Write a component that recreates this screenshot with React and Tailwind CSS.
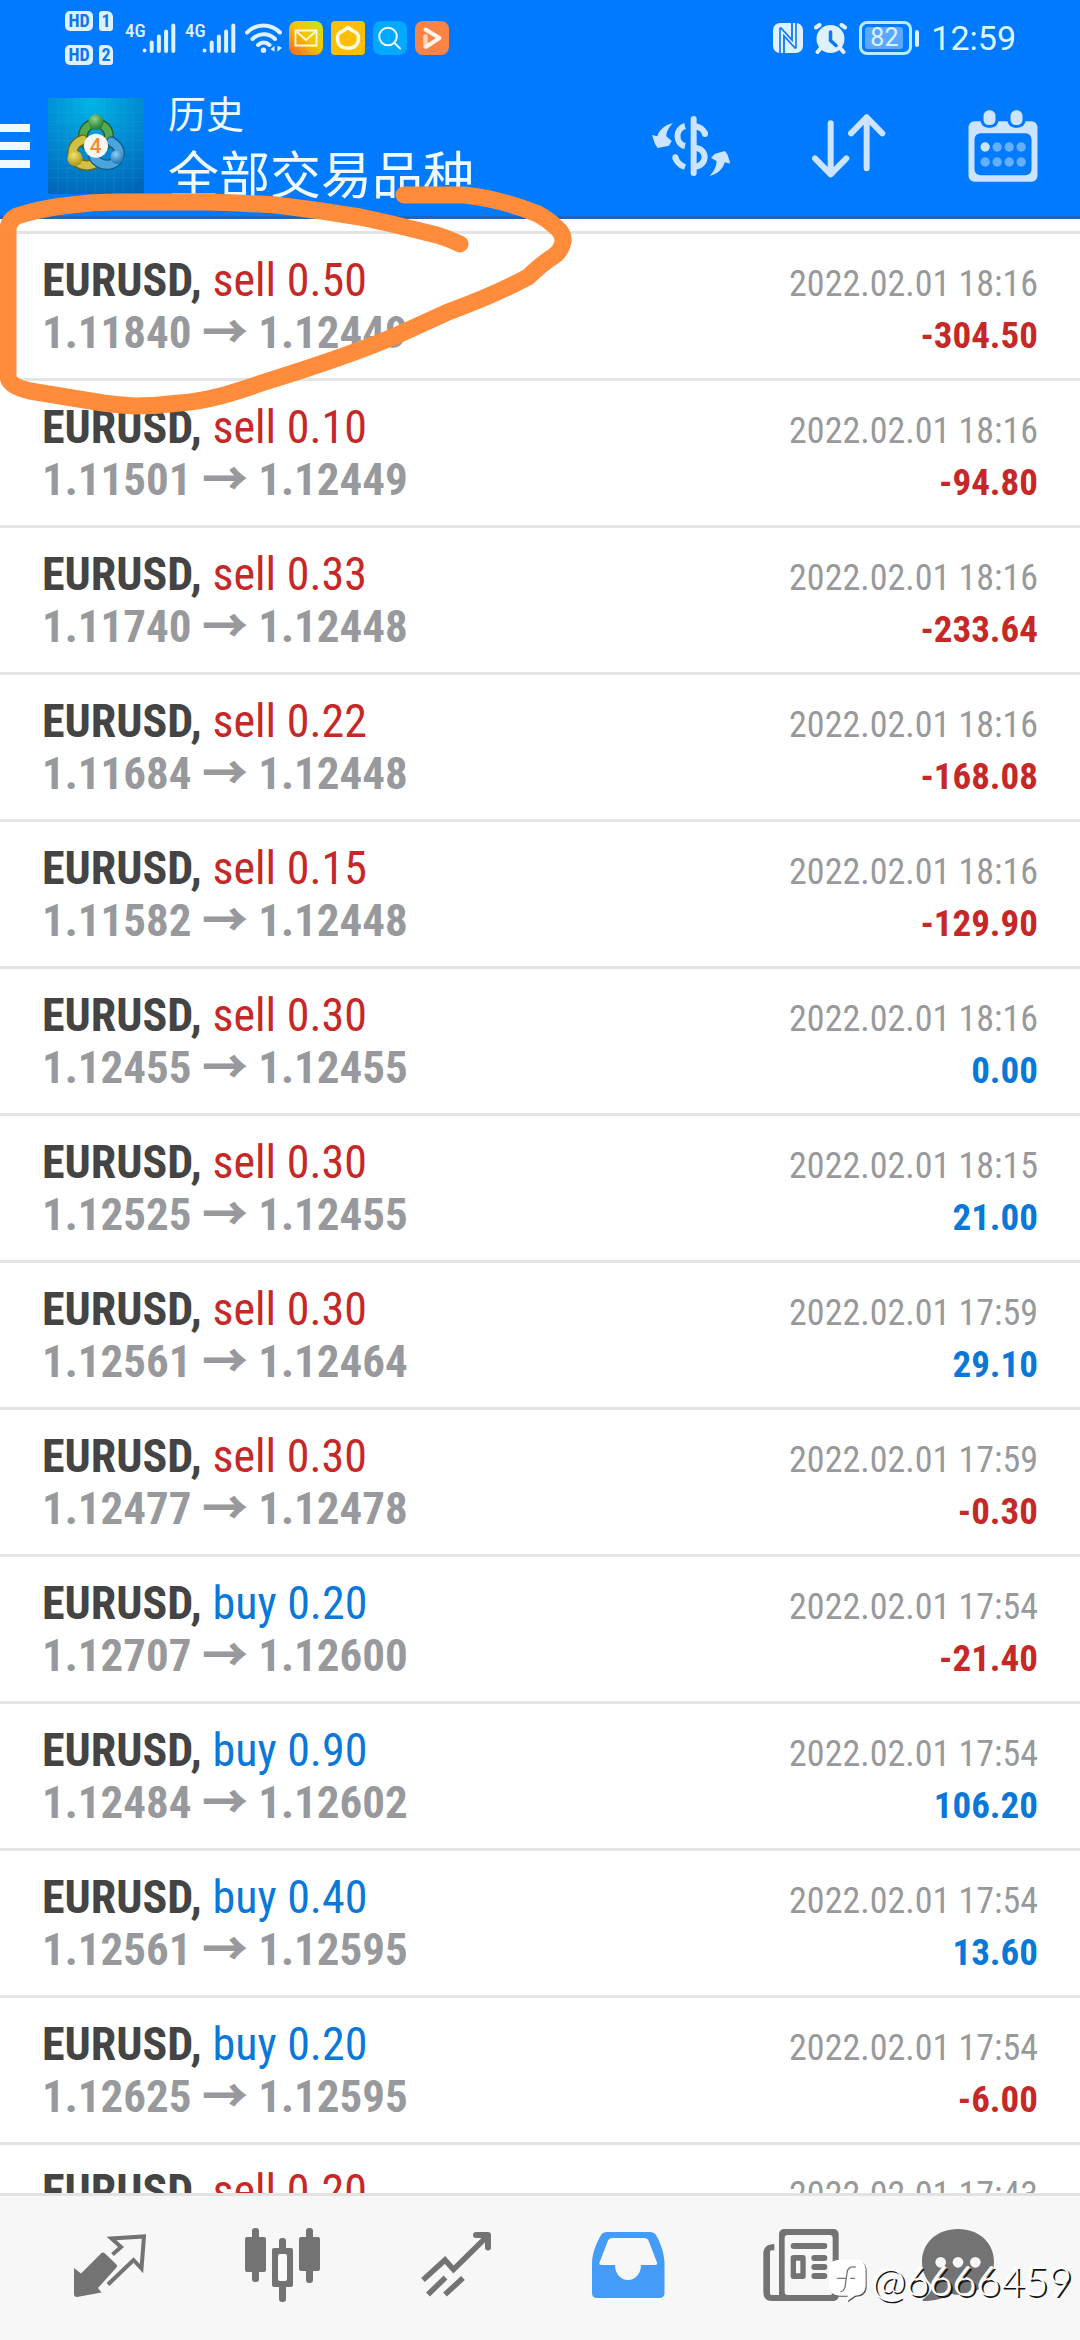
const deals = [
  { id: 1, side: "sell", volume: "0.50", open: "1.11840", close: "1.12449", time: "2022.02.01 18:16", profit: -304.5 },
  { id: 2, side: "sell", volume: "0.10", open: "1.11501", close: "1.12449", time: "2022.02.01 18:16", profit: -94.8 },
  { id: 3, side: "sell", volume: "0.33", open: "1.11740", close: "1.12448", time: "2022.02.01 18:16", profit: -233.64 },
  { id: 4, side: "sell", volume: "0.22", open: "1.11684", close: "1.12448", time: "2022.02.01 18:16", profit: -168.08 },
  { id: 5, side: "sell", volume: "0.15", open: "1.11582", close: "1.12448", time: "2022.02.01 18:16", profit: -129.9 },
  { id: 6, side: "sell", volume: "0.30", open: "1.12455", close: "1.12455", time: "2022.02.01 18:16", profit: 0 },
  { id: 7, side: "sell", volume: "0.30", open: "1.12525", close: "1.12455", time: "2022.02.01 18:15", profit: 21 },
  { id: 8, side: "sell", volume: "0.30", open: "1.12561", close: "1.12464", time: "2022.02.01 17:59", profit: 29.1 },
  { id: 9, side: "sell", volume: "0.30", open: "1.12477", close: "1.12478", time: "2022.02.01 17:59", profit: -0.3 },
  { id: 10, side: "buy", volume: "0.20", open: "1.12707", close: "1.12600", time: "2022.02.01 17:54", profit: -21.4 },
  { id: 11, side: "buy", volume: "0.90", open: "1.12484", close: "1.12602", time: "2022.02.01 17:54", profit: 106.2 },
  { id: 12, side: "buy", volume: "0.40", open: "1.12561", close: "1.12595", time: "2022.02.01 17:54", profit: 13.6 },
  { id: 13, side: "buy", volume: "0.20", open: "1.12625", close: "1.12595", time: "2022.02.01 17:54", profit: -6 },
  { id: 14, side: "sell", volume: "0.20", time: "2022.02.01 17:43" },
];

function SimBadge({ slot }) {
  return (
    <div className="flex gap-[6px] font-['Roboto_Condensed',sans-serif] text-[18px] leading-[20px] font-bold text-[#0a78f0]">
      <span className="h-5 w-7 rounded-[5px] bg-[#dff1ff] text-center">HD</span>
      <span className="h-5 w-[14px] rounded-[3px] rounded-tr-[6px] bg-[#dff1ff] text-center">{slot}</span>
    </div>
  );
}

function Signal() {
  return (
    <div className="flex items-start">
      <span className="w-[17px] font-['Roboto_Condensed',sans-serif] text-[19px] leading-[16px] font-medium text-[#dff1ff]">4G</span>
      <svg width="34" height="30" viewBox="0 0 34 30" fill="none" stroke="#dff1ff" strokeWidth="4" strokeLinecap="round">
        <path d="M2.500 27.500v.1M9.700 19.500v8.500M16.900 13.500v14.500M24.100 8.500v19.500M31.300 2.500v25.500" />
      </svg>
    </div>
  );
}

function StatusBar() {
  return (
    <div className="flex h-[76px] items-center pr-[64px] pl-[65px]">
      <div className="flex flex-col gap-[14px]">
        <SimBadge slot="1" />
        <SimBadge slot="2" />
      </div>
      <div className="ml-3 flex items-center gap-[9px]">
        <Signal />
        <Signal />
        <svg width="37" height="30" viewBox="0 0 37 30" fill="none" stroke="#dff1ff" strokeWidth="4" strokeLinecap="round">
          <path d="M2 9.500c9.500-9.500 24-9.500 33 0M7.500 16c6.500-6.300 16-6.300 22.500 0M13 22c3.500-3.300 8-3.300 11.500 0" />
          <circle cx="18.500" cy="27.300" r="2.700" fill="#dff1ff" stroke="none" />
          <path d="M29.500 22.800v6l-4-2.500zM32.500 22.800v6l4.500-4z" fill="#dff1ff" stroke="none" />
        </svg>
      </div>
      <div className="ml-[7px] flex gap-2">
        <svg width="34" height="34" viewBox="0 0 34 34">
          <defs>
            <linearGradient id="mail" x1="0" y1="1" x2="1" y2="0">
              <stop offset="0" stopColor="#f9621c" />
              <stop offset=".5" stopColor="#f9c000" />
              <stop offset="1" stopColor="#c4e81c" />
            </linearGradient>
          </defs>
          <rect width="34" height="34" rx="8" fill="url(#mail)" />
          <path d="M6.500 9.500h21v15h-21zM8 11l9 8 9-8" fill="none" stroke="#fffbe0" strokeWidth="1.800" />
        </svg>
        <svg width="34" height="34" viewBox="0 0 34 34">
          <rect width="34" height="34" rx="4" fill="#fcbf05" />
          <path d="M17 6.500l4.500 3.200c4.500 1.500 6.700 5 6 9.500-1 5-5 8-10.500 8s-9.500-3-10.500-8c-.7-4.500 1.500-8 6-9.500z" fill="none" stroke="#fffbe0" strokeWidth="3.500" strokeLinejoin="round" />
        </svg>
        <svg width="34" height="34" viewBox="0 0 34 34">
          <rect width="34" height="34" rx="8" fill="#04a8fd" />
          <circle cx="15" cy="15.500" r="8.800" fill="none" stroke="#e8fbff" strokeWidth="2" />
          <path d="M21 21.500l6 6" stroke="#e8fbff" strokeWidth="2" strokeLinecap="round" />
        </svg>
        <svg width="34" height="34" viewBox="0 0 34 34">
          <rect width="34" height="34" rx="8" fill="#fb8444" />
          <path d="M10.500 15.500v10" stroke="#fdd5bd" strokeWidth="4.500" strokeLinecap="round" />
          <path d="M10.500 8.500l14 8.500-13 8.500" fill="none" stroke="#fff5ee" strokeWidth="4" strokeLinecap="round" strokeLinejoin="round" />
        </svg>
      </div>
      <div className="ml-auto flex items-center">
        <svg width="30" height="30" viewBox="0 0 30 30">
          <rect width="30" height="30" rx="7" fill="#dff1ff" />
          <path d="M7 30V4.500M23 0v25.500" fill="none" stroke="#0a78f0" strokeWidth="1.600" />
          <path d="M7.500 4.500L19 17V0M22.500 25.500L11 13v17" fill="none" stroke="#0a78f0" strokeWidth="1.800" />
        </svg>
        <svg className="ml-[11px]" width="33" height="31" viewBox="0 0 33 31" stroke="#dff1ff" strokeLinecap="round">
          <circle cx="16.500" cy="16" r="14" fill="#dff1ff" stroke="none" />
          <path d="M2 4.500L5.500 2M31 4.500L27.500 2M6.500 25.500L3.500 29M26.500 25.500l3 3.500" strokeWidth="4" />
          <path d="M16.500 9v8.500l5.500 5" fill="none" stroke="#0a78f0" strokeWidth="3.500" />
        </svg>
        <div className="ml-3 flex h-[34px] w-[53px] rounded-[8px] border-3 border-[#b8ecff] p-[3px]">
          <span className="w-[38px] rounded-[3px] bg-[#5aa9ff] pl-[5px] font-['Roboto',sans-serif] text-[25px] leading-[22px] text-[#dff1ff]">82</span>
        </div>
        <div className="ml-[3px] h-[17px] w-1 rounded-full bg-[#dff1ff]"></div>
        <time className="ml-3 font-['Roboto',sans-serif] text-[34px] leading-10 text-[#dff8ff]">12:59</time>
      </div>
    </div>
  );
}

function Logo() {
  return (
    <svg className="ml-[18px]" width="96" height="96" viewBox="-6 87 288 288" aria-hidden="true">
      <defs>
        <radialGradient id="tile" cx=".45" cy=".05" r="1">
          <stop offset="0" stopColor="#00b4e6" />
          <stop offset=".5" stopColor="#028cd2" />
          <stop offset="1" stopColor="#0067b8" />
        </radialGradient>
        <radialGradient id="green" cx=".4" cy=".3" r=".7">
          <stop offset="0" stopColor="#8fd487" />
          <stop offset="1" stopColor="#1d7a31" />
        </radialGradient>
        <radialGradient id="yellow" cx=".4" cy=".3" r=".7">
          <stop offset="0" stopColor="#f0e36a" />
          <stop offset="1" stopColor="#ab9516" />
        </radialGradient>
        <radialGradient id="blue" cx=".4" cy=".3" r=".7">
          <stop offset="0" stopColor="#8ed0f5" />
          <stop offset="1" stopColor="#1b74b5" />
        </radialGradient>
      </defs>
      <rect x="-6" y="87" width="288" height="288" fill="url(#tile)" />
      <path d="M24 87v288M52 87v288M80 87v288M108 87v288M136 87v288M164 87v288M192 87v288M220 87v288M248 87v288M-6 130h288M-6 158h288M-6 186h288M-6 214h288M-6 242h288M-6 270h288M-6 298h288M-6 326h288" stroke="#4cc3ee" strokeOpacity=".2" strokeWidth="2" />
      <g fill="none" strokeLinecap="round">
        <circle cx="138" cy="202" r="39" stroke="#1c5f2b" strokeWidth="30" />
        <circle cx="138" cy="202" r="39" stroke="#58a84f" strokeWidth="22" />
        <path d="M134 284c-26 12-58 2-66-22-4-24 8-42 30-50" stroke="#6d6414" strokeWidth="32" />
        <path d="M134 284c-26 12-58 2-66-22-4-24 8-42 30-50" stroke="#cfc144" strokeWidth="24" />
        <path d="M184 218c20 12 30 30 22 48-12 26-46 28-68 8-6-6-8-12-8-18" stroke="#165a8f" strokeWidth="32" />
        <path d="M184 218c20 12 30 30 22 48-12 26-46 28-68 8-6-6-8-12-8-18" stroke="#4aa5dc" strokeWidth="24" />
      </g>
      <circle cx="138" cy="159" r="23" fill="url(#green)" />
      <circle cx="75" cy="268" r="23" fill="url(#yellow)" />
      <circle cx="201" cy="264" r="20" fill="url(#blue)" />
      <circle cx="138" cy="230" r="36" fill="#f6f6f6" />
      <text x="137" y="252" textAnchor="middle" fontFamily="Roboto, sans-serif" fontSize="62" fontWeight="500" fill="#f28a2e">4</text>
    </svg>
  );
}

function Header() {
  return (
    <header className="border-b-3 border-[#1b66b8] bg-[#007aff]">
      <StatusBar />
      <div className="flex h-[140px] items-center pr-[42px]">
        <button type="button" aria-label="Menu" className="flex w-[30px] flex-col gap-[10px]">
          <span className="h-2 bg-[#eefaff]"></span>
          <span className="h-2 bg-[#eefaff]"></span>
          <span className="h-2 bg-[#eefaff]"></span>
        </button>
        <Logo />
        <div className="ml-6 font-['Noto_Sans_CJK_SC',sans-serif] text-[#eefaff]">
          <p className="text-[38px] leading-[52px]">历史</p>
          <h1 className="text-[51px] leading-[68px]">全部交易品种</h1>
        </div>
        <div className="ml-auto flex items-center gap-[82px]">
          <button type="button" aria-label="Symbols">
            <svg width="78" height="60" viewBox="33 45 234 180" fill="#cce4ff">
              <path d="M96 66C84 78 76 92 76 106l16 14-8 14-34 7-8-12-9-27 16 4C54 88 70 72 96 66z" />
              <path d="M205 225c14-12 20-26 22-44l-17-11 12-12 30-8 8 12 8 26-17-4c-4 18-18 34-46 41z" />
              <g fill="none" stroke="#cce4ff" strokeWidth="18">
                <path d="M132 75c-30 8-30 54 0 60M103 169c4 14 14 24 29 29" />
                <path d="M158 75c18 2 30 10 34 24M158 140c44 0 44 56 0 58" />
                <path d="M158 54v162M192 97v2M103 169v2" strokeLinecap="round" />
              </g>
            </svg>
          </button>
          <button type="button" aria-label="Sort">
            <svg width="74" height="64" viewBox="508 44 222 192" fill="none" stroke="#cce4ff" strokeWidth="18" strokeLinecap="round" strokeLinejoin="round">
              <path d="M564 72v153M517 177l47 48 47-48M672 207V54M625 102l47-48 47 48" />
            </svg>
          </button>
          <button type="button" aria-label="Period">
            <svg width="70" height="72" viewBox="983 28 209 216">
              <rect x="984" y="62" width="207" height="181" rx="18" fill="#cce4ff" />
              <rect x="1002" y="98" width="171" height="126" rx="18" fill="#007aff" />
              <rect x="1020" y="20" width="54" height="61" rx="22" fill="#007aff" />
              <rect x="1101" y="20" width="54" height="61" rx="22" fill="#007aff" />
              <rect x="1029" y="29" width="36" height="44" rx="16" fill="#cce4ff" />
              <rect x="1110" y="29" width="36" height="44" rx="16" fill="#cce4ff" />
              <circle cx="1034" cy="139" r="14" fill="#cce4ff" />
              <g fill="#66afff">
                <circle cx="1070" cy="139" r="14" />
                <circle cx="1106" cy="139" r="14" />
                <circle cx="1142" cy="139" r="14" />
                <circle cx="1034" cy="184" r="14" />
                <circle cx="1070" cy="184" r="14" />
                <circle cx="1106" cy="184" r="14" />
                <circle cx="1142" cy="184" r="14" />
              </g>
            </svg>
          </button>
        </div>
      </div>
    </header>
  );
}

function DealRow({ deal }) {
  return (
    <li className="h-[147px] shrink-0 border-b-3 border-[#e4e4e4] pt-[21px] pr-[42px] pl-[42px]">
      <div className="flex items-baseline justify-between leading-[51px]">
        <p className="text-[46px]">
          <span className="font-bold text-[#444444]">EURUSD, </span>
          <span className={deal.side === "sell" ? "text-[#c62828]" : "text-[#0a78d8]"}>
            {deal.side} {deal.volume}
          </span>
        </p>
        <time className="text-[36px] text-[#98999c]">{deal.time}</time>
      </div>
      {deal.open && (
        <div className="flex items-baseline justify-between leading-[46px] font-bold">
          <p className="text-[45px] text-[#98999c]">
            {deal.open} <span className="font-['Noto_Sans_CJK_SC',sans-serif] text-[46px] leading-[20px] font-black">→</span> {deal.close}
          </p>
          <span className={deal.profit < 0 ? "text-[37px] text-[#c62828]" : "text-[37px] text-[#0a78d8]"}>
            {deal.profit.toFixed(2)}
          </span>
        </div>
      )}
    </li>
  );
}

function TabBar() {
  return (
    <nav className="grid h-[147px] shrink-0 grid-cols-[1fr_1fr_1fr_1fr_1fr_142px] items-center justify-items-center border-t-3 border-[#e2e2e2] bg-[#f7f7f7] pr-[51px] pb-[6px] pl-6">
      <button type="button" aria-label="Quotes">
        <svg width="72" height="63" viewBox="0 0 72 63">
          <path d="M0 34l7 5.500 20-20q2-2 4 0l11 10.500q2 2 0 4L24 54l3.500 4.500L3 63q-3 0-3-3z" fill="#737373" />
          <path d="M38.500 20.500L47 13 37.500 4.500 70 2.500 67.500 34.500 59.500 26 34 50.500" fill="none" stroke="#737373" strokeWidth="4" />
        </svg>
      </button>
      <button type="button" aria-label="Chart">
        <svg width="75" height="74" viewBox="0 0 75 74" fill="#737373">
          <rect y="9" width="21" height="35" rx="2" />
          <rect x="7" width="7" height="54" rx="3" />
          <rect x="54" y="9" width="21" height="34" rx="2" />
          <rect x="61" width="7" height="55" rx="3" />
          <rect x="27" y="20" width="21" height="39" rx="2" />
          <rect x="34" y="10" width="7" height="64" rx="3" />
          <rect x="33" y="26" width="9" height="27" rx="2" fill="#fafafa" />
        </svg>
      </button>
      <button type="button" aria-label="Trade">
        <svg width="71" height="66" viewBox="0 0 71 66" fill="none" stroke="#737373" strokeWidth="5">
          <path d="M3 48L25 28l8.500 9.500L67 4.500M8 62.500L25.500 45.500M25 62.500L43 46" strokeWidth="5.500" />
          <path d="M56 3h12v12.500" strokeWidth="6" strokeLinecap="round" strokeLinejoin="round" />
        </svg>
      </button>
      <button type="button" aria-label="History">
        <svg width="73" height="66" viewBox="0 0 73 66">
          <path d="M15 0h43c3 0 5 1 6.500 4C69 12 72.500 22 72.500 32v29c0 3-2 5-5 5H5c-3 0-5-2-5-5V32C0 22 4 12 8.500 4 10 1 12 0 15 0z" fill="#459cf8" />
          <path d="M20 6h33q2.500 0 3.500 2.500l8.500 22q.8 2.500-2 2.500H49c0 8-5 15-13 15s-13-7-13-15H9.500q-2.800 0-2-2.500l8.500-22Q17 6 20 6z" fill="#f7f7f7" />
        </svg>
      </button>
      <button type="button" aria-label="News">
        <svg width="76" height="72" viewBox="36 27 228 216">
          <path d="M70 72q-33 0-33 30v115q0 26 26 26h180v-18H75V92h-5z" fill="#737373" />
          <rect x="84" y="27" width="179" height="216" rx="15" fill="#737373" />
          <rect x="57" y="91" width="21" height="134" rx="5" fill="#f7f7f7" />
          <rect x="101" y="45" width="144" height="180" rx="9" fill="#f7f7f7" />
          <path d="M128 78h92M190 114h30M190 141h30M190 168h30" stroke="#737373" strokeWidth="18" strokeLinecap="round" />
          <path d="M127 105h29q8 0 8 8v56q0 8-8 8h-29q-8 0-8-8v-56q0-8 8-8zM135 122v38h13v-38z" fill="#737373" fillRule="evenodd" />
        </svg>
      </button>
      <button type="button" aria-label="Messages">
        <svg width="72" height="72" viewBox="516 27 216 216">
          <path d="M624 27c64 0 108 42 108 98s-44 99-108 99c-8 0-16 0-22-2-22 14-50 21-80 21-5 0-6-3-2-6 16-12 26-24 28-40-20-18-32-42-32-72 0-56 44-98 108-98z" fill="#737373" />
          <circle cx="572" cy="127" r="16" fill="#f7f7f7" />
          <circle cx="624" cy="127" r="16" fill="#f7f7f7" />
          <circle cx="676" cy="127" r="16" fill="#f7f7f7" />
        </svg>
      </button>
    </nav>
  );
}

// Hand-drawn marker around the first deal
function MarkerStroke() {
  return (
    <svg className="pointer-events-none absolute top-0 left-0" width="600" height="430" viewBox="0 0 600 430" aria-hidden="true">
      <path
        d="M404 195H464C494 198 518 206 538 214Q549 220 557 228Q564 234 563 242Q561 251 554 256Q544 262 528 277C502 291 478 301 448 312Q426 322 402 333C362 351 316 366 268 381C240 390 212 401 180 403Q157 406 134 406Q118 405 103 403L30 391Q8 386 8 376V230Q8 221 17 216Q42 208 71 205Q93 202 115 202H207Q241 203 276 205Q318 210 360 217C390 223 416 230 437 235Q450 239 460 244"
        fill="none"
        stroke="#ff8c3a"
        strokeWidth="17"
        strokeLinecap="round"
        strokeLinejoin="round"
      />
    </svg>
  );
}

function Watermark() {
  return (
    <div className="pointer-events-none absolute right-[8px] bottom-[37px] flex items-center gap-[5px]">
      <svg width="38" height="44" viewBox="240 126 114 132" aria-hidden="true">
        <path d="M275 131h46q32 0 32 32v44q0 32-32 32l-24 17 2-17h-24q-32 0-32-32v-44q0-32 32-32z" fill="#555" />
        <path d="M272 128h46q32 0 32 32v44q0 32-32 32l-24 17 2-17h-24q-32 0-32-32v-44q0-32 32-32z" fill="#fff" />
        <path d="M320 150q-24-4-26 18l-6 42q-2 12-14 14M264 184h26M304 184h14" fill="none" stroke="#777" strokeWidth="4" />
      </svg>
      <span className="font-['Lato',sans-serif] text-[41px] leading-[44px] font-light text-white [text-shadow:2px_2px_0px_#111,-1px_-1px_0px_#fff]">@6666459</span>
    </div>
  );
}

export default function App() {
  return (
    <div className="relative flex h-screen flex-col overflow-hidden bg-white font-['Roboto_Condensed','Roboto',sans-serif]">
      <Header />
      <main className="min-h-0 flex-1 overflow-hidden pt-3">
        <ul className="flex flex-col border-t-3 border-[#e4e4e4]">
          {deals.map((deal) => (
            <DealRow key={deal.id} deal={deal} />
          ))}
        </ul>
      </main>
      <TabBar />
      <MarkerStroke />
      <Watermark />
    </div>
  );
}
